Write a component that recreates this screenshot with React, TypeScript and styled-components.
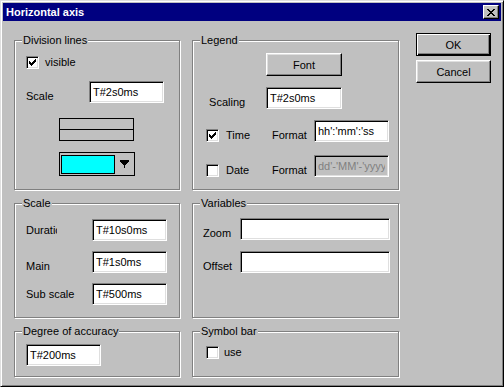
import styled, { createGlobalStyle } from "styled-components";

const GlobalStyle = createGlobalStyle`
    body {
        margin: 0;
        background: #c0c0c0;
    }
    * {
        box-sizing: border-box;
    }
`;

const Window = styled.div`
    width: 504px;
    height: 387px;
    background: #c0c0c0;
    border: 1px solid;
    border-color: #dfdfdf #000 #000 #dfdfdf;
    box-shadow: inset 1px 1px 0 #fff, inset -1px -1px 0 #808080;
    padding: 2px;
    font-family: "Liberation Sans", Arial, sans-serif;
    font-size: 11px;
    color: #000;
    display: flex;
    flex-direction: column;
`;

const TitleBar = styled.div`
    height: 18px;
    background: #000080;
    color: #fff;
    font-weight: bold;
    display: flex;
    align-items: center;
    justify-content: space-between;
    padding: 0 2px 0 3px;
`;

const CloseBtn = styled.div`
    width: 16px;
    height: 14px;
    background: #c0c0c0;
    border: 1px solid;
    border-color: #fff #000 #000 #fff;
    box-shadow: inset -1px -1px 0 #808080;
    display: flex;
    align-items: center;
    justify-content: center;
`;

const Body = styled.div`
    display: flex;
    padding: 12px 0 0 11px;
`;

const Column = styled.div<{ $w: number }>`
    width: ${(p) => p.$w}px;
    padding-top: 7px;
    display: flex;
    flex-direction: column;
    gap: 13px;
`;

const Frame = styled.div<{ $h: number; $pad: string }>`
    position: relative;
    height: ${(p) => p.$h}px;
    border: 1px solid #808080;
    box-shadow: 1px 1px 0 #fff, inset 1px 1px 0 #fff;
    padding: ${(p) => p.$pad};
    display: flex;
    flex-direction: column;
`;

const Caption = styled.span`
    position: absolute;
    top: -7px;
    left: 7px;
    padding: 0 1px;
    line-height: 13px;
    background: #c0c0c0;
`;

const Row = styled.div<{ $align?: string; $mt?: number }>`
    display: flex;
    align-items: ${(p) => p.$align || "flex-end"};
    margin-top: ${(p) => p.$mt || 0}px;
`;

const Label = styled.span<{ $w: number; $clip?: number }>`
    width: ${(p) => p.$w}px;
    line-height: 13px;
    white-space: nowrap;
    overflow: hidden;
    max-width: ${(p) => p.$clip || p.$w}px;
    margin-right: ${(p) => (p.$clip ? p.$w - p.$clip : 0)}px;
`;

const Field = styled.input<{ $w: number; $off?: boolean }>`
    width: ${(p) => p.$w}px;
    height: 22px;
    margin: 0;
    border: 1px solid;
    border-color: #808080 #fff #fff #808080;
    box-shadow: inset 1px 1px 0 #000, inset -1px -1px 0 #dfdfdf;
    background: ${(p) => (p.$off ? "#c0c0c0" : "#fff")};
    color: ${(p) => (p.$off ? "#808080" : "#000")};
    padding: 0 3px;
    font: inherit;
    outline: none;
`;

const CheckBox = styled.span`
    width: 13px;
    height: 13px;
    flex: none;
    background: #fff;
    border: 1px solid;
    border-color: #808080 #fff #fff #808080;
    box-shadow: inset 1px 1px 0 #000, inset -1px -1px 0 #dfdfdf;
    display: flex;
    align-items: center;
    justify-content: center;
`;

const CheckItem = styled.label<{ $gap: number; $w?: number }>`
    display: flex;
    align-items: flex-end;
    gap: ${(p) => p.$gap}px;
    line-height: 13px;
    width: ${(p) => (p.$w ? `${p.$w}px` : "auto")};
`;

const Button = styled.button<{ $default?: boolean; $w: number }>`
    width: ${(p) => p.$w}px;
    height: 23px;
    margin: 0;
    padding: 0;
    background: #c0c0c0;
    font: inherit;
    color: #000;
    border: 1px solid;
    border-color: ${(p) => (p.$default ? "#000" : "#fff #000 #000 #fff")};
    box-shadow: ${(p) =>
        p.$default
            ? "inset 1px 1px 0 #fff, inset -1px -1px 0 #000, inset -2px -2px 0 #808080"
            : "inset -1px -1px 0 #808080, inset 1px 1px 0 #dfdfdf"};
`;

const ButtonCol = styled.div`
    margin-left: 17px;
    display: flex;
    flex-direction: column;
    gap: 4px;
`;

const LineBox = styled.div`
    width: 75px;
    height: 23px;
    margin: 15px 0 0 33px;
    border: 1px solid #000;
    background: linear-gradient(#000, #000) center / 100% 1px no-repeat;
`;

const Combo = styled.div`
    width: 76px;
    height: 24px;
    margin: 11px 0 0 33px;
    border: 1px solid #000;
    padding: 1px;
    display: flex;
    align-items: center;
`;

const Swatch = styled.div<{ $color: string }>`
    width: 54px;
    height: 19px;
    border: 1px solid #000;
    background: ${(p) => p.$color};
`;

const ArrowSlot = styled.div`
    flex: 1;
    display: flex;
    justify-content: center;
    padding-top: 1px;
`;

function Check({ on }: { on: boolean }) {
    const pattern = ["......x", ".....xx", "x...xxx", "xx.xxx.", "xxxxx..", ".xxx...", "..x...."];
    return (
        <CheckBox>
            {on && (
                <svg width="7" height="7" shapeRendering="crispEdges">
                    {pattern.flatMap((row, y) =>
                        row.split("").map((c, x) => (c === "x" ? <rect key={`${x}-${y}`} x={x} y={y} width="1" height="1" fill="#000" /> : null))
                    )}
                </svg>
            )}
        </CheckBox>
    );
}

export default function App() {
    return (
        <>
            <GlobalStyle />
            <Window>
                <TitleBar>
                    <span>Horizontal axis</span>
                    <CloseBtn>
                        <svg width="8" height="7" shapeRendering="crispEdges">
                            <path d="M0 0h2v1h-2zM6 0h2v1h-2zM1 1h2v1h-2zM5 1h2v1h-2zM2 2h4v1h-4zM3 3h2v1h-2zM2 4h4v1h-4zM1 5h2v1h-2zM5 5h2v1h-2zM0 6h2v1h-2zM6 6h2v1h-2z" fill="#000" />
                        </svg>
                    </CloseBtn>
                </TitleBar>
                <Body>
                    <Column $w={166}>
                        <Frame $h={150} $pad="15px 0 0 11px">
                            <Caption>Division lines</Caption>
                            <CheckItem $gap={6}>
                                <Check on />
                                visible
                            </CheckItem>
                            <Row $mt={12}>
                                <Label $w={63}>Scale</Label>
                                <Field $w={75} defaultValue="T#2s0ms" />
                            </Row>
                            <LineBox />
                            <Combo>
                                <Swatch $color="#00ffff" />
                                <ArrowSlot>
                                    <svg width="9" height="10" shapeRendering="crispEdges">
                                        <path d="M0 0h9v2h-1v1h-1v1h-1v1h-1v3h-1v-3h-1v-1h-1v-1h-1v-1h-1z" fill="#000" />
                                    </svg>
                                </ArrowSlot>
                            </Combo>
                        </Frame>
                        <Frame $h={115} $pad="15px 0 0 11px">
                            <Caption>Scale</Caption>
                            <Row $align="center">
                                <Label $w={66} $clip={31}>Duration</Label>
                                <Field $w={75} defaultValue="T#10s0ms" />
                            </Row>
                            <Row $align="flex-end" $mt={10}>
                                <Label $w={66}>Main</Label>
                                <Field $w={75} defaultValue="T#1s0ms" />
                            </Row>
                            <Row $align="center" $mt={10}>
                                <Label $w={66}>Sub scale</Label>
                                <Field $w={75} defaultValue="T#500ms" />
                            </Row>
                        </Frame>
                        <Frame $h={46} $pad="12px 0 0 11px">
                            <Caption>Degree of accuracy</Caption>
                            <Field $w={75} defaultValue="T#200ms" />
                        </Frame>
                    </Column>
                    <Column $w={207} style={{ marginLeft: 12 }}>
                        <Frame $h={150} $pad="12px 0 0 13px">
                            <Caption>Legend</Caption>
                            <Row>
                                <Label $w={60} />
                                <Button $w={76}>Font</Button>
                            </Row>
                            <Row $mt={11}>
                                <Label $w={60}>&nbsp;Scaling</Label>
                                <Field $w={76} defaultValue="T#2s0ms" />
                            </Row>
                            <Row $mt={11}>
                                <CheckItem $gap={7} $w={66}>
                                    <Check on />
                                    Time
                                </CheckItem>
                                <Label $w={42}>Format</Label>
                                <Field $w={75} defaultValue="hh':'mm':'ss" />
                            </Row>
                            <Row $mt={13}>
                                <CheckItem $gap={7} $w={66}>
                                    <Check on={false} />
                                    Date
                                </CheckItem>
                                <Label $w={42}>Format</Label>
                                <Field $w={75} $off disabled defaultValue="dd'-'MM'-'yyyy" />
                            </Row>
                        </Frame>
                        <Frame $h={115} $pad="14px 0 0 10px">
                            <Caption>Variables</Caption>
                            <Row>
                                <Label $w={37}>Zoom</Label>
                                <Field $w={150} />
                            </Row>
                            <Row $mt={11}>
                                <Label $w={37}>Offset</Label>
                                <Field $w={150} />
                            </Row>
                        </Frame>
                        <Frame $h={46} $pad="14px 0 0 13px">
                            <Caption>Symbol bar</Caption>
                            <CheckItem $gap={5}>
                                <Check on={false} />
                                use
                            </CheckItem>
                        </Frame>
                    </Column>
                    <ButtonCol>
                        <Button $w={75} $default>OK</Button>
                        <Button $w={75}>Cancel</Button>
                    </ButtonCol>
                </Body>
            </Window>
        </>
    );
}
